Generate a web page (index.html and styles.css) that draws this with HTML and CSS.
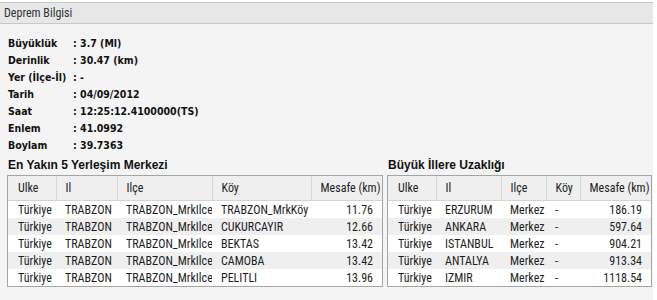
FILE: index.html
```html
<!DOCTYPE html>
<html lang="tr">
<head>
<meta charset="utf-8">
<title>Deprem Bilgisi</title>
<link rel="stylesheet" href="styles.css">
</head>
<body>
<div class="panel">
  <div class="panel-title">Deprem Bilgisi</div>
  <div class="panel-body">
    <div class="info">
      <span class="lbl">Büyüklük</span><span class="val">: 3.7 (Ml)</span>
      <span class="lbl">Derinlik</span><span class="val">: 30.47 (km)</span>
      <span class="lbl">Yer (İlçe-İl)</span><span class="val">: -</span>
      <span class="lbl">Tarih</span><span class="val">: 04/09/2012</span>
      <span class="lbl">Saat</span><span class="val">: 12:25:12.4100000(TS)</span>
      <span class="lbl">Enlem</span><span class="val">: 41.0992</span>
      <span class="lbl">Boylam</span><span class="val">: 39.7363</span>
    </div>
    <div class="sections">
      <div class="section sec-left">
        <div class="sec-title">En Yakın 5 Yerleşim Merkezi</div>
        <div class="grid-box">
          <table class="grid">
            <colgroup><col style="width:48px"><col style="width:61px"><col style="width:95px"><col style="width:99px"><col style="width:71px"></colgroup>
            <thead><tr><th>Ulke</th><th>Il</th><th>Ilçe</th><th>Köy</th><th class="num">Mesafe (km)</th></tr></thead>
            <tbody>
              <tr><td>Türkiye</td><td>TRABZON</td><td>TRABZON_MrkIlce</td><td>TRABZON_MrkKöy</td><td class="num">11.76</td></tr>
              <tr><td>Türkiye</td><td>TRABZON</td><td>TRABZON_MrkIlce</td><td>CUKURCAYIR</td><td class="num">12.66</td></tr>
              <tr><td>Türkiye</td><td>TRABZON</td><td>TRABZON_MrkIlce</td><td>BEKTAS</td><td class="num">13.42</td></tr>
              <tr><td>Türkiye</td><td>TRABZON</td><td>TRABZON_MrkIlce</td><td>CAMOBA</td><td class="num">13.42</td></tr>
              <tr><td>Türkiye</td><td>TRABZON</td><td>TRABZON_MrkIlce</td><td>PELITLI</td><td class="num">13.96</td></tr>
            </tbody>
          </table>
        </div>
      </div>
      <div class="section sec-right">
        <div class="sec-title">Büyük İllere Uzaklığı</div>
        <div class="grid-box">
          <table class="grid">
            <colgroup><col style="width:48px"><col style="width:65px"><col style="width:45px"><col style="width:34px"><col style="width:71px"></colgroup>
            <thead><tr><th>Ulke</th><th>Il</th><th>Ilçe</th><th>Köy</th><th class="num">Mesafe (km)</th></tr></thead>
            <tbody>
              <tr><td>Türkiye</td><td>ERZURUM</td><td>Merkez</td><td>-</td><td class="num">186.19</td></tr>
              <tr><td>Türkiye</td><td>ANKARA</td><td>Merkez</td><td>-</td><td class="num">597.64</td></tr>
              <tr><td>Türkiye</td><td>ISTANBUL</td><td>Merkez</td><td>-</td><td class="num">904.21</td></tr>
              <tr><td>Türkiye</td><td>ANTALYA</td><td>Merkez</td><td>-</td><td class="num">913.34</td></tr>
              <tr><td>Türkiye</td><td>IZMIR</td><td>Merkez</td><td>-</td><td class="num">1118.54</td></tr>
            </tbody>
          </table>
        </div>
      </div>
    </div>
  </div>
</div>
</body>
</html>
```
FILE: styles.css
```css
html, body {
  margin: 0;
  padding: 0;
  background: #ffffff;
}
body {
  font-family: "Liberation Sans Narrow", "Roboto Condensed", Lato, sans-serif;
  color: #1e1e1e;
  height: 300px;
  overflow: hidden;
}
.panel {
  margin-top: 2px;
  width: 653px;
  height: 298px;
  border-top: 1px solid #c6c6c6;
  background: #f4f4f4;
  box-sizing: border-box;
}
.panel-title {
  height: 20px;
  line-height: 20px;
  background: #e7e7e7;
  border-bottom: 1px solid #c8c8c8;
  padding-left: 4px;
  font-size: 12px;
  color: #333;
}
.panel-body {
  padding: 10px 0 0 8px;
}
.info {
  display: grid;
  grid-template-columns: 65px auto;
  grid-auto-rows: 17px;
  align-items: center;
  font-family: "DejaVu Sans Condensed", "DejaVu Sans", sans-serif;
  font-weight: bold;
  font-size: 10.5px;
  color: #111;
}
.lbl, .val { white-space: nowrap; }
.sections {
  display: flex;
  gap: 4px;
  margin-top: 4px;
  margin-left: -1px;
}
.sec-title {
  font-family: "Liberation Sans", sans-serif;
  font-weight: bold;
  font-size: 12px;
  height: 18px;
  line-height: 16px;
  padding-left: 1px;
  color: #111;
}
.grid-box {
  border: 1px solid #a5a5a5;
  background: #ffffff;
  height: 112px;
  box-sizing: border-box;
}
.sec-left .grid-box { width: 376px; }
.sec-right .grid-box { width: 265px; }
.grid {
  border-collapse: collapse;
  table-layout: fixed;
  font-size: 12px;
  width: 100%;
}
.grid th {
  background: #efefef;
  height: 24px;
  font-weight: normal;
  text-align: left;
  padding: 0 6px 0 9px;
  border-left: 1px solid #d6d6d6;
  border-bottom: 1px solid #d3d3d3;
  white-space: nowrap;
  overflow: hidden;
}
.grid th:first-child { border-left: none; padding-left: 10px; }
.grid td {
  height: 17px;
  padding: 0 6px 0 9px;
  white-space: nowrap;
  overflow: hidden;
}
.grid td:first-child { padding-left: 10px; }
.grid .num { text-align: right; padding-right: 9px; }
.grid tbody tr:nth-child(even) td { background: #efefef; }
```
